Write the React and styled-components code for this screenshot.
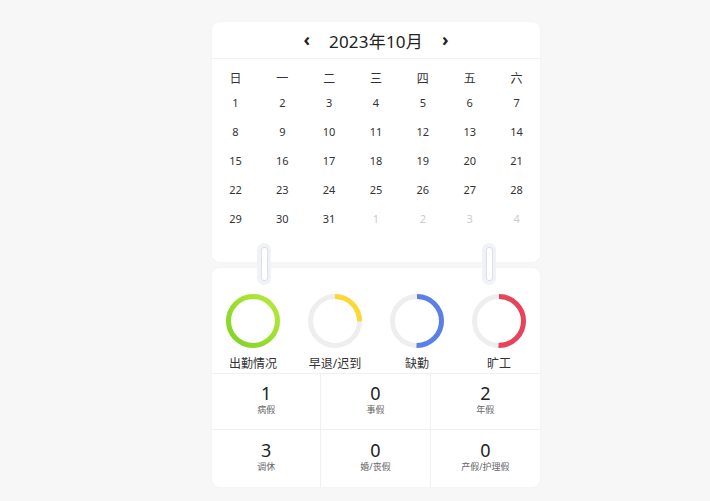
import React from "react";
import styled, { createGlobalStyle } from "styled-components";

const Global = createGlobalStyle`
  html, body { margin: 0; padding: 0; background: #f7f7f7; }
  body { font-family: "Noto Sans", "Noto Sans CJK SC", sans-serif; color: #333; }
`;

const Page = styled.div`
  width: 710px;
  height: 501px;
  display: flex;
  flex-direction: column;
  align-items: flex-start;
  padding: 22px 0 0 212px;
  box-sizing: border-box;
`;

const Column = styled.div`
  width: 328px;
  display: flex;
  flex-direction: column;
  gap: 6px;
  position: relative;
`;

const Card = styled.div`
  background: #fff;
  border-radius: 8px;
  box-shadow: 0 0 3px rgba(0, 0, 0, 0.03);
  overflow: hidden;
`;

const Header = styled.div`
  height: 36px;
  display: flex;
  align-items: center;
  justify-content: center;
  gap: 19px;
  border-bottom: 1px solid #f1f1f1;
`;

const Arrow = styled.span`
  font-size: 18px;
  font-weight: 700;
  color: #222;
  line-height: 1;
  margin-top: -3px;
`;

const Title = styled.div`
  font-size: 17px;
  color: #222;
  letter-spacing: 0.2px;
`;

const Grid = styled.div`
  display: grid;
  grid-template-columns: repeat(7, 1fr);
  grid-template-rows: 20px;
  grid-auto-rows: 29px;
  padding: 9px 0 29px;
`;

const Cell = styled.div`
  display: flex;
  align-items: center;
  justify-content: center;
  font-size: ${(p) => (p.$week ? "12px" : "11px")};
  color: ${(p) => (p.$muted ? "#ccc" : "#333")};
`;

const Clip = styled.div`
  position: absolute;
  top: 221px;
  left: ${(p) => p.$left}px;
  width: 14px;
  height: 42px;
  border-radius: 7px;
  background: #f1f2f7;
  display: flex;
  align-items: center;
  justify-content: center;
  &::after {
    content: "";
    width: 5px;
    height: 32px;
    border-radius: 3px;
    background: #fff;
    border: 1px solid #dcdfe6;
  }
`;

const Rings = styled.div`
  display: grid;
  grid-template-columns: repeat(4, 1fr);
  padding: 25px 0 1px;
`;

const RingItem = styled.div`
  display: flex;
  flex-direction: column;
  align-items: center;
  gap: 5px;
`;

const RingLabel = styled.div`
  font-size: 12px;
  color: #333;
`;

const Stats = styled.div`
  display: grid;
  grid-template-columns: repeat(3, 1fr);
  grid-template-rows: 56px 57px;
  border-top: 1px solid #f0f0f0;
`;

const Stat = styled.div`
  display: flex;
  flex-direction: column;
  align-items: center;
  justify-content: center;
  padding-bottom: 4px;
  border-right: ${(p) => (p.$last ? "none" : "1px solid #f0f0f0")};
  border-bottom: ${(p) => (p.$bottom ? "none" : "1px solid #f0f0f0")};
`;

const StatNum = styled.div`
  font-size: 18px;
  line-height: 18px;
  color: #222;
`;

const StatLabel = styled.div`
  font-size: 9px;
  color: #666;
  margin-top: 1px;
`;

function Ring({ color, pct, gradient, id }) {
  const r = 24.5;
  const c = 2 * Math.PI * r;
  return (
    <svg width="56" height="56" viewBox="0 0 56 56">
      {gradient && (
        <defs>
          <linearGradient id={id} x1="0" y1="0" x2="1" y2="1">
            <stop offset="0" stopColor="#7ed321" />
            <stop offset="1" stopColor="#b9ea3c" />
          </linearGradient>
        </defs>
      )}
      <circle cx="28" cy="28" r={r} fill="none" stroke="#eeeeee" strokeWidth="5" />
      <circle
        cx="28"
        cy="28"
        r={r}
        fill="none"
        stroke={gradient ? `url(#${id})` : color}
        strokeWidth="5"
        strokeDasharray={`${c * pct} ${c}`}
        transform="rotate(-90 28 28)"
      />
    </svg>
  );
}

const weeks = ["日", "一", "二", "三", "四", "五", "六"];
const days = [];
for (let i = 1; i <= 31; i++) days.push({ d: i });
for (let i = 1; i <= 4; i++) days.push({ d: i, muted: true });

const rings = [
  { label: "出勤情况", pct: 1, gradient: true },
  { label: "早退/迟到", pct: 0.25, color: "#fdd835" },
  { label: "缺勤", pct: 0.5, color: "#5b7fe8" },
  { label: "旷工", pct: 0.5, color: "#e8435a" },
];

const stats = [
  { n: 1, l: "病假" },
  { n: 0, l: "事假" },
  { n: 2, l: "年假" },
  { n: 3, l: "调休" },
  { n: 0, l: "婚/丧假" },
  { n: 0, l: "产假/护理假" },
];

export default function App() {
  return (
    <>
      <Global />
      <Page>
        <Column>
          <Card>
            <Header>
              <Arrow>‹</Arrow>
              <Title>2023年10月</Title>
              <Arrow>›</Arrow>
            </Header>
            <Grid>
              {weeks.map((w) => (
                <Cell key={w} $week>
                  {w}
                </Cell>
              ))}
              {days.map((x, i) => (
                <Cell key={i} $muted={x.muted}>
                  {x.d}
                </Cell>
              ))}
            </Grid>
          </Card>
          <Clip $left={45} />
          <Clip $left={270} />
          <Card>
            <Rings>
              {rings.map((r, i) => (
                <RingItem key={r.label}>
                  <Ring {...r} id={`g${i}`} />
                  <RingLabel>{r.label}</RingLabel>
                </RingItem>
              ))}
            </Rings>
            <Stats>
              {stats.map((s, i) => (
                <Stat key={i} $last={i % 3 === 2} $bottom={i >= 3}>
                  <StatNum>{s.n}</StatNum>
                  <StatLabel>{s.l}</StatLabel>
                </Stat>
              ))}
            </Stats>
          </Card>
        </Column>
      </Page>
    </>
  );
}
